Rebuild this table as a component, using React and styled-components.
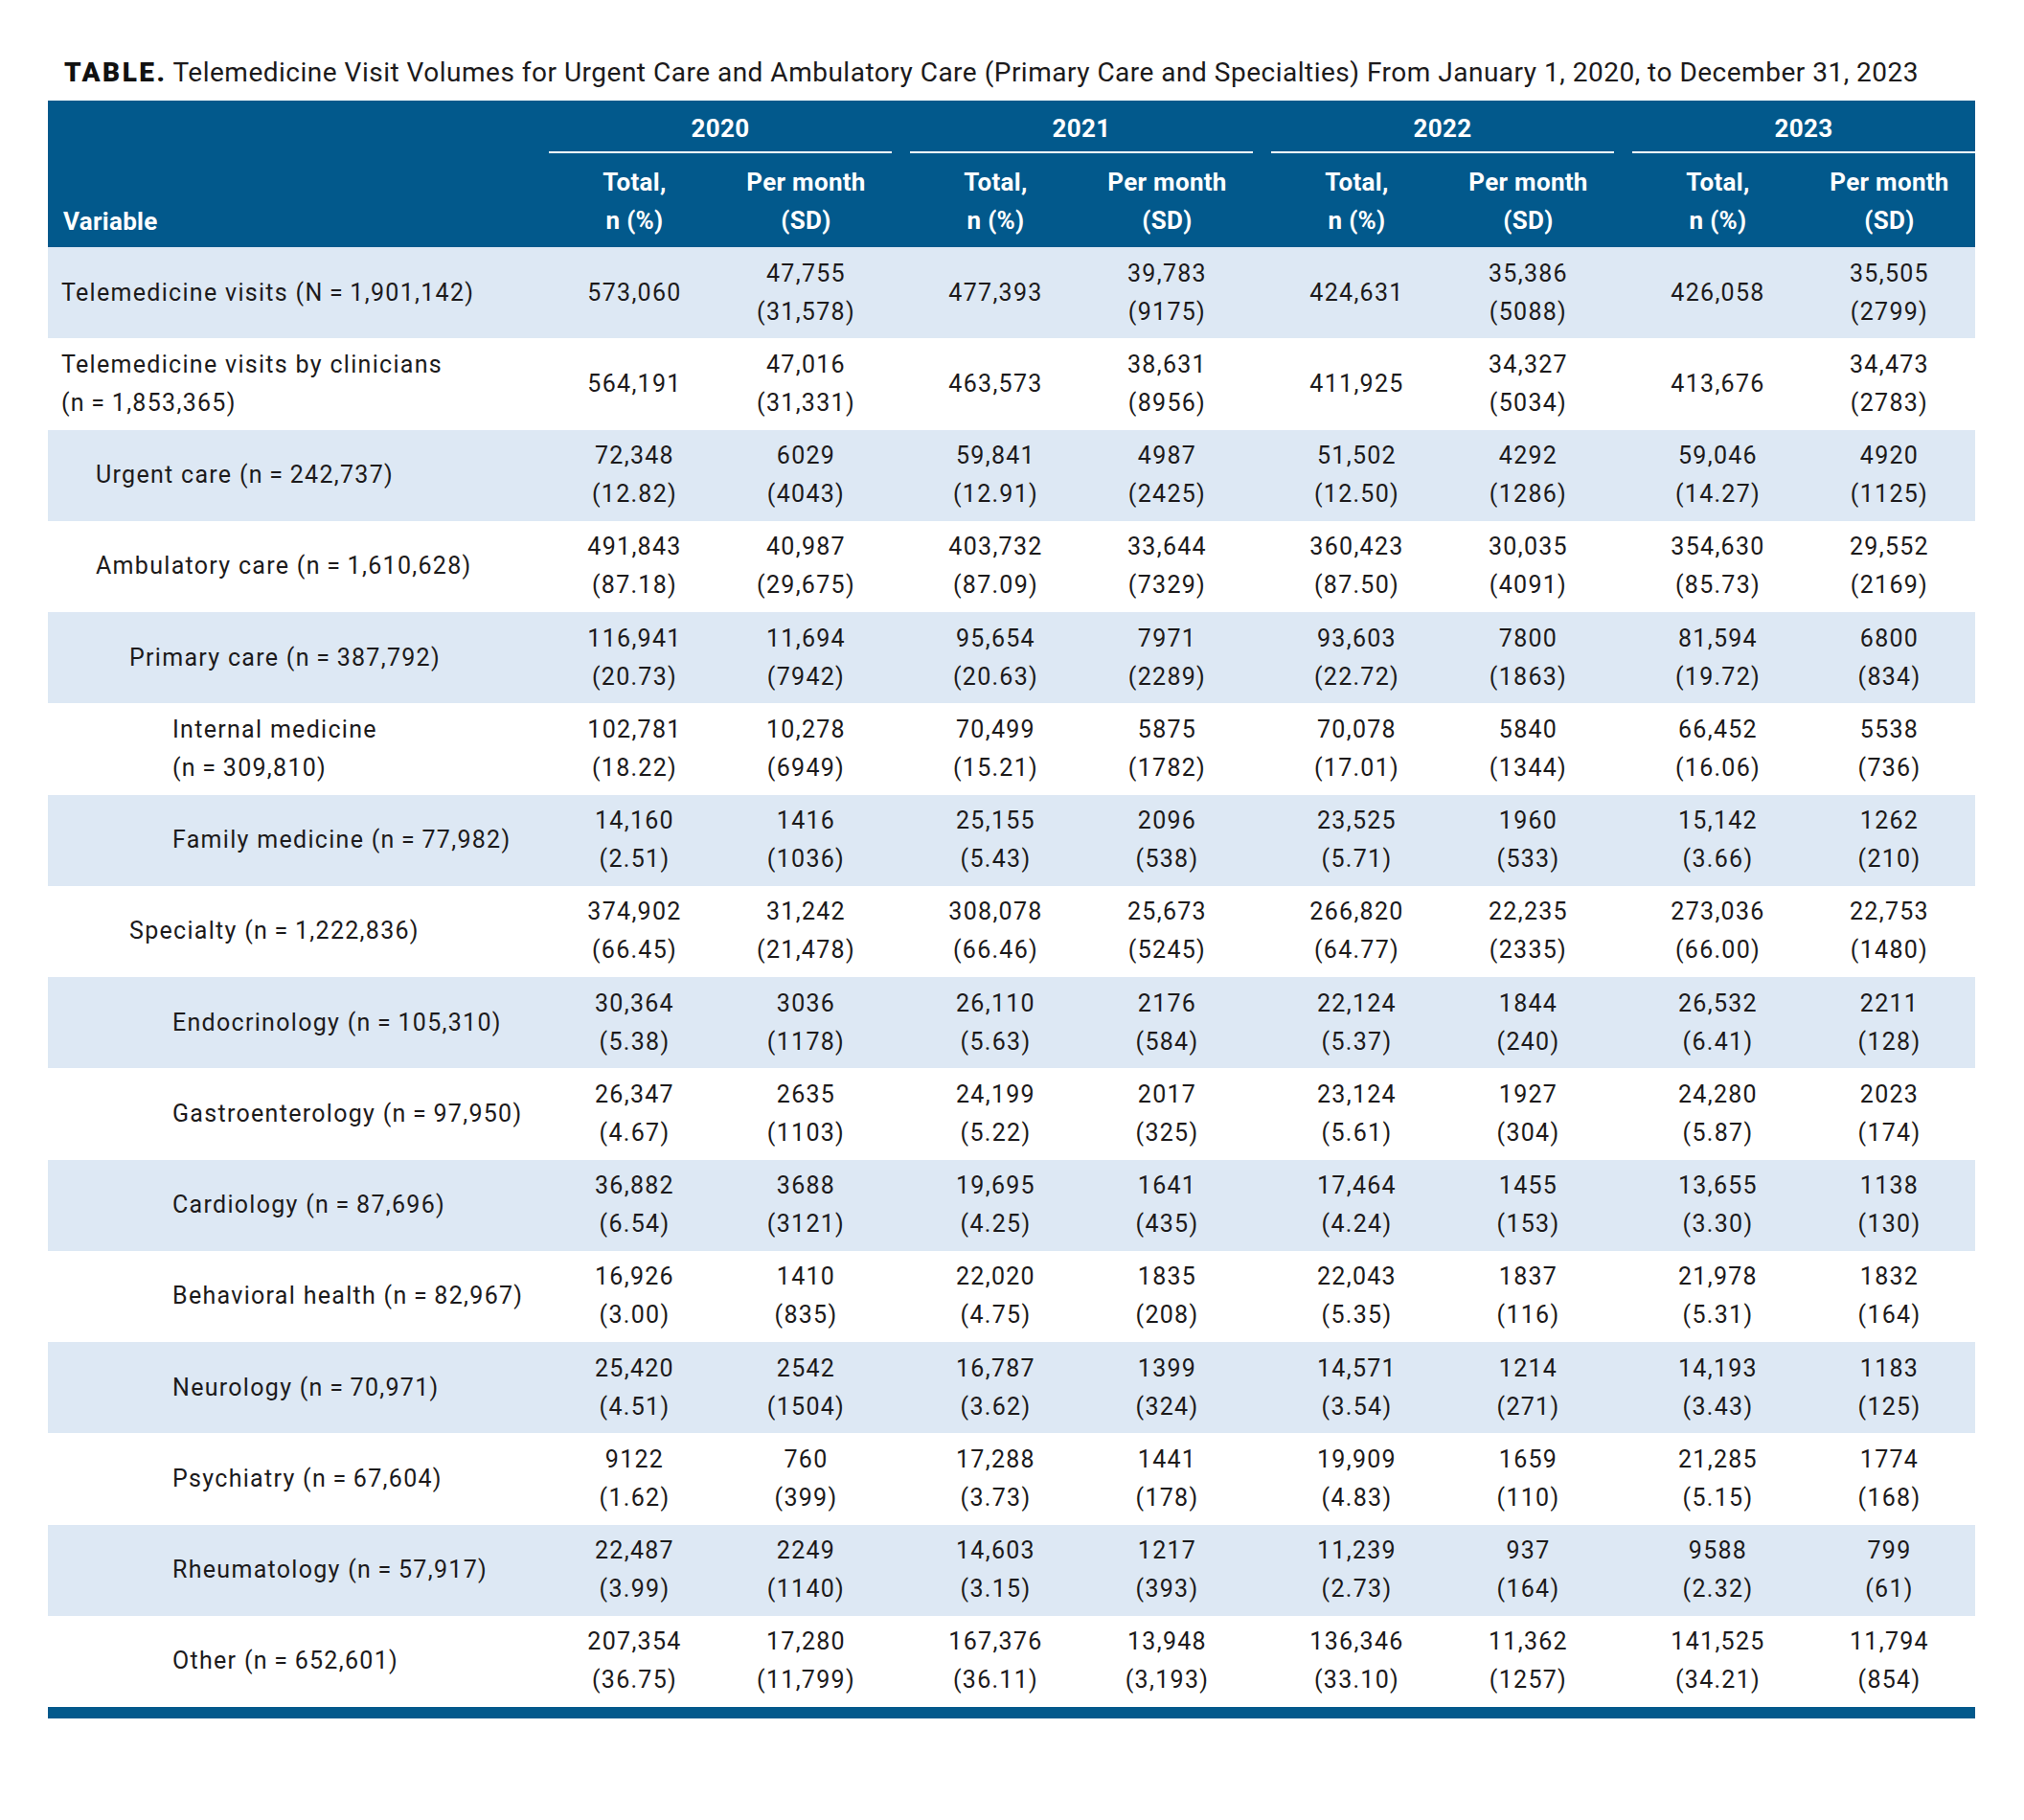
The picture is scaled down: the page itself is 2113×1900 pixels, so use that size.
import React from "react";
import styled, { createGlobalStyle } from "styled-components";

const BLUE = "#02598c";
const STRIPE = "#dde8f4";
const GAP = "19px";
const COLS = `504px repeat(4, 1fr)`;

const GlobalStyle = createGlobalStyle`
  body {
    margin: 0;
    background: #ffffff;
    font-family: Roboto, "Liberation Sans", Arial, sans-serif;
    color: #1c1a1b;
  }
`;

const Page = styled.div`
  padding: 59px 51px 100px 50px;
  width: 2012px;
`;

const Caption = styled.div`
  font-size: 28px;
  line-height: 34px;
  padding-left: 17px;
  margin-bottom: 12px;
  letter-spacing: 0.5px;
  white-space: nowrap;
`;

const CaptionLabel = styled.span`
  font-weight: 900;
  letter-spacing: 2.5px;
  margin-right: 6px;
  color: #111;
`;

const Head = styled.div`
  background: ${BLUE};
  color: #ffffff;
  display: grid;
  grid-template-columns: ${COLS};
  column-gap: ${GAP};
  font-weight: 700;
  font-size: 26px;
  letter-spacing: 0.3px;
`;

const VarHead = styled.div`
  align-self: end;
  padding: 0 0 7px 16px;
  line-height: 40px;
`;

const YearGroup = styled.div`
  display: grid;
  grid-template-columns: 1fr 1fr;
`;

const Year = styled.div`
  grid-column: 1 / 3;
  text-align: center;
  height: 53px;
  line-height: 58px;
  border-bottom: 2px solid #ffffff;
`;

const SubHead = styled.div`
  text-align: center;
  line-height: 40px;
  padding: 10px 0 8px;
`;

const Row = styled.div`
  display: grid;
  grid-template-columns: ${COLS};
  column-gap: ${GAP};
  background: ${(p) => (p.$striped ? STRIPE : "#ffffff")};
  min-height: 95.25px;
  align-items: center;
  font-size: 25px;
  line-height: 40px;
  letter-spacing: 1.3px;
`;

const Label = styled.div`
  padding-left: ${(p) => [14, 50, 85, 130][p.$level]}px;
`;

const Cells = styled.div`
  display: grid;
  grid-template-columns: 1fr 1fr;
  align-items: center;
`;

const Cell = styled.div`
  text-align: center;
`;

const Bottom = styled.div`
  height: 12px;
  background: ${BLUE};
`;

const n = (s) => `(n\u2009=\u2009${s})`;

const rows = [
  { l: ["Telemedicine visits (N\u2009=\u20091,901,142)"], lv: 0, v: [["573,060"], ["47,755", "(31,578)"], ["477,393"], ["39,783", "(9175)"], ["424,631"], ["35,386", "(5088)"], ["426,058"], ["35,505", "(2799)"]] },
  { l: ["Telemedicine visits by clinicians", n("1,853,365")], lv: 0, v: [["564,191"], ["47,016", "(31,331)"], ["463,573"], ["38,631", "(8956)"], ["411,925"], ["34,327", "(5034)"], ["413,676"], ["34,473", "(2783)"]] },
  { l: [`Urgent care ${n("242,737")}`], lv: 1, v: [["72,348", "(12.82)"], ["6029", "(4043)"], ["59,841", "(12.91)"], ["4987", "(2425)"], ["51,502", "(12.50)"], ["4292", "(1286)"], ["59,046", "(14.27)"], ["4920", "(1125)"]] },
  { l: [`Ambulatory care ${n("1,610,628")}`], lv: 1, v: [["491,843", "(87.18)"], ["40,987", "(29,675)"], ["403,732", "(87.09)"], ["33,644", "(7329)"], ["360,423", "(87.50)"], ["30,035", "(4091)"], ["354,630", "(85.73)"], ["29,552", "(2169)"]] },
  { l: [`Primary care ${n("387,792")}`], lv: 2, v: [["116,941", "(20.73)"], ["11,694", "(7942)"], ["95,654", "(20.63)"], ["7971", "(2289)"], ["93,603", "(22.72)"], ["7800", "(1863)"], ["81,594", "(19.72)"], ["6800", "(834)"]] },
  { l: ["Internal medicine", n("309,810")], lv: 3, v: [["102,781", "(18.22)"], ["10,278", "(6949)"], ["70,499", "(15.21)"], ["5875", "(1782)"], ["70,078", "(17.01)"], ["5840", "(1344)"], ["66,452", "(16.06)"], ["5538", "(736)"]] },
  { l: [`Family medicine ${n("77,982")}`], lv: 3, v: [["14,160", "(2.51)"], ["1416", "(1036)"], ["25,155", "(5.43)"], ["2096", "(538)"], ["23,525", "(5.71)"], ["1960", "(533)"], ["15,142", "(3.66)"], ["1262", "(210)"]] },
  { l: [`Specialty ${n("1,222,836")}`], lv: 2, v: [["374,902", "(66.45)"], ["31,242", "(21,478)"], ["308,078", "(66.46)"], ["25,673", "(5245)"], ["266,820", "(64.77)"], ["22,235", "(2335)"], ["273,036", "(66.00)"], ["22,753", "(1480)"]] },
  { l: [`Endocrinology ${n("105,310")}`], lv: 3, v: [["30,364", "(5.38)"], ["3036", "(1178)"], ["26,110", "(5.63)"], ["2176", "(584)"], ["22,124", "(5.37)"], ["1844", "(240)"], ["26,532", "(6.41)"], ["2211", "(128)"]] },
  { l: [`Gastroenterology ${n("97,950")}`], lv: 3, v: [["26,347", "(4.67)"], ["2635", "(1103)"], ["24,199", "(5.22)"], ["2017", "(325)"], ["23,124", "(5.61)"], ["1927", "(304)"], ["24,280", "(5.87)"], ["2023", "(174)"]] },
  { l: [`Cardiology ${n("87,696")}`], lv: 3, v: [["36,882", "(6.54)"], ["3688", "(3121)"], ["19,695", "(4.25)"], ["1641", "(435)"], ["17,464", "(4.24)"], ["1455", "(153)"], ["13,655", "(3.30)"], ["1138", "(130)"]] },
  { l: [`Behavioral health ${n("82,967")}`], lv: 3, v: [["16,926", "(3.00)"], ["1410", "(835)"], ["22,020", "(4.75)"], ["1835", "(208)"], ["22,043", "(5.35)"], ["1837", "(116)"], ["21,978", "(5.31)"], ["1832", "(164)"]] },
  { l: [`Neurology ${n("70,971")}`], lv: 3, v: [["25,420", "(4.51)"], ["2542", "(1504)"], ["16,787", "(3.62)"], ["1399", "(324)"], ["14,571", "(3.54)"], ["1214", "(271)"], ["14,193", "(3.43)"], ["1183", "(125)"]] },
  { l: [`Psychiatry ${n("67,604")}`], lv: 3, v: [["9122", "(1.62)"], ["760", "(399)"], ["17,288", "(3.73)"], ["1441", "(178)"], ["19,909", "(4.83)"], ["1659", "(110)"], ["21,285", "(5.15)"], ["1774", "(168)"]] },
  { l: [`Rheumatology ${n("57,917")}`], lv: 3, v: [["22,487", "(3.99)"], ["2249", "(1140)"], ["14,603", "(3.15)"], ["1217", "(393)"], ["11,239", "(2.73)"], ["937", "(164)"], ["9588", "(2.32)"], ["799", "(61)"]] },
  { l: [`Other ${n("652,601")}`], lv: 3, v: [["207,354", "(36.75)"], ["17,280", "(11,799)"], ["167,376", "(36.11)"], ["13,948", "(3,193)"], ["136,346", "(33.10)"], ["11,362", "(1257)"], ["141,525", "(34.21)"], ["11,794", "(854)"]] },
];

const years = ["2020", "2021", "2022", "2023"];

const Lines = ({ items }) =>
  items.map((t, i) => (
    <React.Fragment key={i}>
      {i > 0 && <br />}
      {t}
    </React.Fragment>
  ));

export default function App() {
  return (
    <Page>
      <GlobalStyle />
      <Caption>
        <CaptionLabel>TABLE.</CaptionLabel>
        Telemedicine Visit Volumes for Urgent Care and Ambulatory Care (Primary Care and Specialties) From January 1, 2020, to December 31, 2023
      </Caption>
      <Head>
        <VarHead>Variable</VarHead>
        {years.map((y) => (
          <YearGroup key={y}>
            <Year>{y}</Year>
            <SubHead>Total,<br />n (%)</SubHead>
            <SubHead>Per month<br />(SD)</SubHead>
          </YearGroup>
        ))}
      </Head>
      {rows.map((r, i) => (
        <Row key={i} $striped={i % 2 === 0}>
          <Label $level={r.lv}>
            <Lines items={r.l} />
          </Label>
          {[0, 1, 2, 3].map((g) => (
            <Cells key={g}>
              <Cell><Lines items={r.v[g * 2]} /></Cell>
              <Cell><Lines items={r.v[g * 2 + 1]} /></Cell>
            </Cells>
          ))}
        </Row>
      ))}
      <Bottom />
    </Page>
  );
}
